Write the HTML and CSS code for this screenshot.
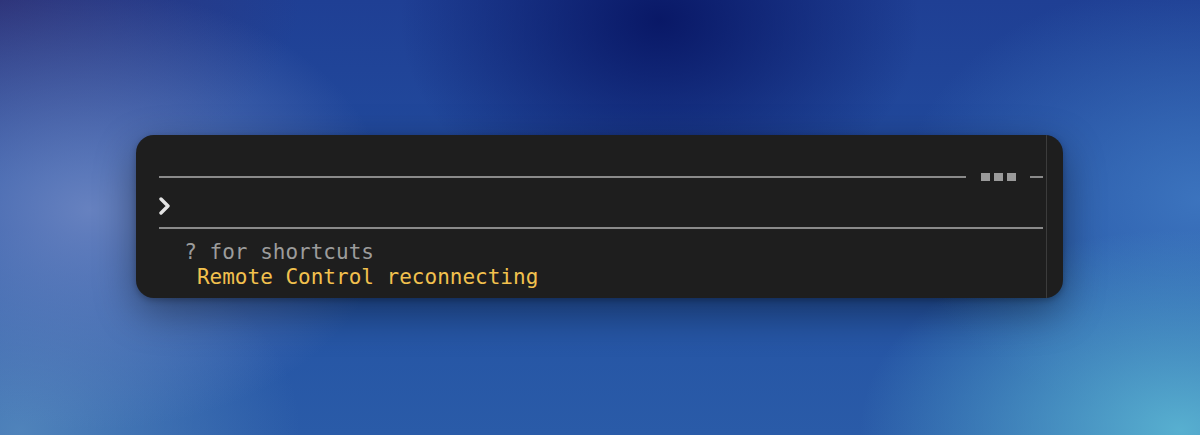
FILE: index.html
```html
<!DOCTYPE html>
<html lang="en">
<head>
<meta charset="utf-8">
<title>Terminal</title>
<link rel="stylesheet" href="styles.css">
</head>
<body>
<div class="stage">
  <div class="card">
    <div class="main">
      <div class="toprow">
        <div class="rule"></div>
        <div class="dots"><span></span><span></span><span></span></div>
        <div class="stub"></div>
      </div>
      <div class="prompt">
        <svg class="chev" width="12" height="18" viewBox="0 0 12 18" aria-hidden="true">
          <polyline points="2,2 9,9 2,16" fill="none" stroke="#e4e4e4" stroke-width="3.4" stroke-linecap="round" stroke-linejoin="round"/>
        </svg>
      </div>
      <div class="rule full"></div>
      <div class="text">
        <div class="hint">  ? for shortcuts</div>
        <div class="status">   Remote Control reconnecting</div>
      </div>
    </div>
    <div class="scroll"></div>
  </div>
</div>
</body>
</html>
```

FILE: styles.css
```css
html, body {
  margin: 0;
  padding: 0;
  width: 1200px;
  height: 435px;
  overflow: hidden;
}

body {
  background:
    radial-gradient(ellipse 260px 200px at 660px 20px, rgba(8,22,100,0.95), rgba(8,22,100,0) 100%),
    radial-gradient(ellipse 300px 220px at 90px 210px, rgba(110,135,195,0.9), rgba(110,135,195,0) 100%),
    radial-gradient(ellipse 320px 200px at 1180px 430px, rgba(90,180,210,0.95), rgba(90,180,210,0) 100%),
    radial-gradient(ellipse 300px 180px at 0px 0px, rgba(48,52,120,0.9), rgba(48,52,120,0) 100%),
    radial-gradient(ellipse 300px 220px at 1200px 200px, rgba(64,122,195,0.85), rgba(64,122,195,0) 100%),
    radial-gradient(ellipse 280px 200px at 20px 430px, rgba(86,138,190,0.85), rgba(86,138,190,0) 100%),
    linear-gradient(180deg, #1f3f94 0%, #2352a3 60%, #2a5ba8 100%);
  font-family: "DejaVu Sans Mono", "Liberation Mono", monospace;
}

.stage {
  padding: 135px 0 0 136px;
}

.card {
  width: 927px;
  height: 163px;
  background: #1e1e1e;
  border-radius: 18px;
  box-shadow: 0 14px 40px rgba(0, 0, 0, 0.4), 0 2px 6px rgba(0, 0, 0, 0.25);
  display: flex;
  overflow: hidden;
}

.main {
  width: 884px;
  padding: 37px 3px 0 23px;
  display: flex;
  flex-direction: column;
}

.main > * {
  flex-shrink: 0;
}

.toprow {
  height: 10px;
  display: flex;
  align-items: center;
}

.rule {
  height: 2px;
  background: #8a8a8a;
  flex: 1;
}

.main > .rule.full {
  flex: none;
}

.dots {
  display: flex;
  gap: 4px;
  margin: 0 14px 0 15px;
}

.dots span {
  width: 9px;
  height: 8px;
  background: #9a9a9a;
}

.stub {
  width: 13px;
  height: 2px;
  background: #8a8a8a;
}

.prompt {
  height: 45px;
  display: flex;
  align-items: center;
}

.chev {
  margin-top: 2px;
}

.text {
  padding-top: 11px;
  font-size: 21px;
  line-height: 25px;
}

.hint,
.status {
  white-space: pre;
}

.hint {
  color: #9c9c9c;
}

.status {
  color: #f2c14e;
}

.scroll {
  width: 1px;
  background: #3c3c3c;
}
```
